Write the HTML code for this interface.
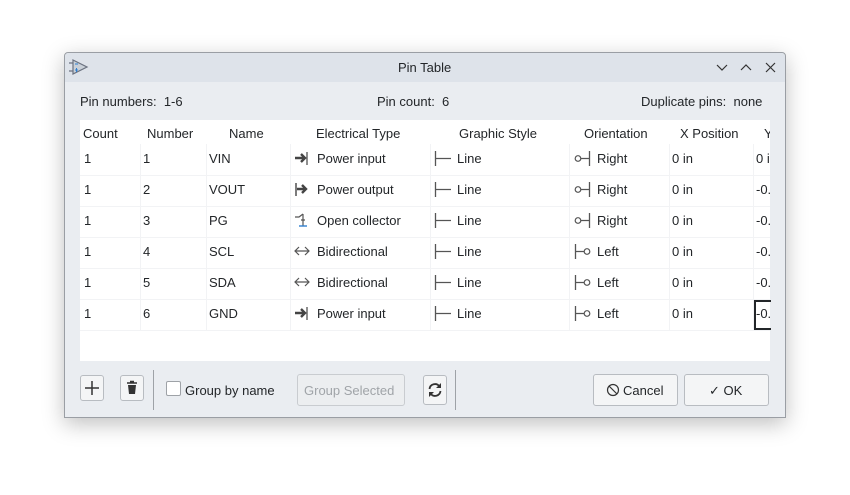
<!DOCTYPE html>
<html><head><style>
*{box-sizing:border-box;margin:0;padding:0}
body{width:850px;height:495px;background:#fff;font-family:"Liberation Sans",sans-serif;font-size:13px;color:#232629;position:relative;overflow:hidden}
.win{position:absolute;left:64px;top:52px;width:722px;height:366px;background:#eaedf1;border:1px solid #9a9ea4;border-radius:4px 4px 0 0;box-shadow:0 6px 22px rgba(0,0,0,.25)}
.title{position:absolute;left:0;top:0;width:720px;height:29px;background:#dee3ea;border-radius:4px 4px 0 0}
.t{position:absolute;white-space:nowrap}
.table{position:absolute;left:15px;top:67px;width:690px;height:241px;background:#fff;overflow:hidden}
.vl{position:absolute;top:0;width:1px;height:211px;background:#f2f3f5}
.hl{position:absolute;left:0;width:690px;height:1px;background:#f2f3f5}
.btn{position:absolute;border:1px solid #b8bcc1;border-radius:3px;background:#f4f5f6}
.sep{position:absolute;top:317px;width:1px;height:40px;background:#9ea2a7}
svg{position:absolute}
</style></head><body>
<div class="win">
<div class="title">
<svg style="left:4px;top:5px" width="22" height="18" viewBox="0 0 22 18"><path d="M4 2 L18 9 L4 16 Z" fill="#c9d0d8" stroke="#6b7280" stroke-width="1.2"/><path d="M0 5h4M0 13h4" stroke="#6b7280" stroke-width="1.2"/><path d="M6 6h3M7.5 10v4M6 12h3" stroke="#2f7fd0" stroke-width="1"/></svg>
<div class="t" style="left:333px;top:7px">Pin Table</div>
<svg style="left:651px;top:9px" width="60" height="12" viewBox="0 0 60 12"><path d="M1 3l5 5 5-5M25 8l5-5 5 5M50 1l9 9M59 1l-9 9" stroke="#333" stroke-width="1.2" fill="none"/></svg>
</div>
<div class="t" style="left:15px;top:41px">Pin numbers:&nbsp; 1-6</div>
<div class="t" style="left:312px;top:41px">Pin count:&nbsp; 6</div>
<div class="t" style="left:576px;top:41px">Duplicate pins:&nbsp; none</div>
<div class="table">
<div class="vl" style="left:60px;top:24px;height:187px"></div>
<div class="vl" style="left:126px;top:24px;height:187px"></div>
<div class="vl" style="left:210px;top:24px;height:187px"></div>
<div class="vl" style="left:350px;top:24px;height:187px"></div>
<div class="vl" style="left:489px;top:24px;height:187px"></div>
<div class="vl" style="left:589px;top:24px;height:187px"></div>
<div class="vl" style="left:673px;top:24px;height:187px"></div>
<div class="hl" style="top:55px"></div><div class="hl" style="top:86px"></div><div class="hl" style="top:117px"></div><div class="hl" style="top:148px"></div><div class="hl" style="top:179px"></div><div class="hl" style="top:210px"></div>
<div class="t" style="left:3px;top:6px">Count</div>
<div class="t" style="left:67px;top:6px">Number</div>
<div class="t" style="left:149px;top:6px">Name</div>
<div class="t" style="left:236px;top:6px">Electrical Type</div>
<div class="t" style="left:379px;top:6px">Graphic Style</div>
<div class="t" style="left:504px;top:6px">Orientation</div>
<div class="t" style="left:600px;top:6px">X Position</div>
<div class="t" style="left:684px;top:6px">Y</div>
</div>
<div id="rows"></div>
<div class="btn" style="left:15px;top:322px;width:24px;height:26px"></div>
<svg style="left:19px;top:327px" width="16" height="16"><path d="M8 1v14M1 8h14" stroke="#333" stroke-width="1.5"/></svg>
<div class="btn" style="left:55px;top:322px;width:24px;height:26px"></div>
<svg style="left:59px;top:327px" width="16" height="16"><path d="M3 3h10M6 1.5h4" stroke="#333" stroke-width="1.6"/><path d="M4 5h8l-1 9H5z" fill="#333"/></svg>
<div class="sep" style="left:88px"></div>
<div style="position:absolute;left:101px;top:328px;width:15px;height:15px;border:1px solid #9ea2a7;border-radius:2px;background:#fff"></div>
<div class="t" style="left:120px;top:330px">Group by name</div>
<div class="btn" style="left:232px;top:321px;width:108px;height:32px;background:#eceef0;border-color:#c9ccd0"></div>
<div class="t" style="left:239px;top:330px;color:#a0a4a8">Group Selected</div>
<div class="btn" style="left:358px;top:322px;width:24px;height:30px"></div>
<svg style="left:362px;top:329px" width="16" height="16" viewBox="0 0 16 16"><path d="M2.5 7A5.5 5.5 0 0 1 12.5 4.5M13.5 9A5.5 5.5 0 0 1 3.5 11.5" stroke="#333" stroke-width="1.8" fill="none"/><path d="M14 1v5h-5zM2 15v-5h5z" fill="#333"/></svg>
<div class="sep" style="left:390px"></div>
<div class="btn" style="left:528px;top:321px;width:85px;height:32px"></div>
<svg style="left:541px;top:330px" width="14" height="14"><circle cx="7" cy="7" r="5.5" stroke="#333" fill="none" stroke-width="1.2"/><path d="M3 3l8 8" stroke="#333" stroke-width="1.2"/></svg>
<div class="t" style="left:558px;top:330px">Cancel</div>
<div class="btn" style="left:619px;top:321px;width:85px;height:32px"></div>
<div class="t" style="left:644px;top:330px">✓ OK</div>
</div>
<script>
var d=[["1","VIN","pi","Power input","r","Right","0 in"],["2","VOUT","po","Power output","r","Right","-0."],["3","PG","oc","Open collector","r","Right","-0."],["4","SCL","bi","Bidirectional","l","Left","-0."],["5","SDA","bi","Bidirectional","l","Left","-0."],["6","GND","pi","Power input","l","Left","-0."]];
var ic={pi:'<path d="M1 8h9M7 4l4 4-4 4" stroke="#444" stroke-width="2.4" fill="none"/><path d="M13 2v13" stroke="#444" stroke-width="1.2"/>',
po:'<path d="M2 2v13" stroke="#444" stroke-width="1.4"/><path d="M3 8h8M8 4l4 4-4 4" stroke="#444" stroke-width="2.4" fill="none"/>',
oc:'<path d="M1 5h4l4 -3M9 2v12M7 8h4" stroke="#555" stroke-width="1.2" fill="none"/><path d="M5 14h8" stroke="#2f7fd0" stroke-width="1.4"/>',
bi:'<path d="M1 8h14M5 4l-4 4 4 4M11 4l4 4-4 4" stroke="#555" stroke-width="1.2" fill="none"/>'};
var h='';
d.forEach(function(r,i){var top=67+31+i*31+1+15-16;
h+='<div class="t" style="left:19px;top:'+top+'px">1</div><div class="t" style="left:78px;top:'+top+'px">'+r[0]+'</div><div class="t" style="left:144px;top:'+top+'px">'+r[1]+'</div>';
h+='<svg style="left:229px;top:'+(top-1)+'px" width="16" height="17">'+ic[r[2]]+'</svg><div class="t" style="left:252px;top:'+top+'px">'+r[3]+'</div>';
h+='<svg style="left:369px;top:'+(top-1)+'px" width="18" height="17"><path d="M1.5 1v15M2 8.5h15" stroke="#555" stroke-width="1.3"/></svg><div class="t" style="left:392px;top:'+top+'px">Line</div>';
h+='<svg style="left:509px;top:'+(top-1)+'px" width="18" height="17">'+(r[4]=='r'?'<circle cx="4" cy="8.5" r="2.8" stroke="#555" fill="none" stroke-width="1.2"/><path d="M7 8.5h8M15.5 1v15" stroke="#555" stroke-width="1.3"/>':'<path d="M1.5 1v15M2 8.5h8" stroke="#555" stroke-width="1.3"/><circle cx="13" cy="8.5" r="2.8" stroke="#555" fill="none" stroke-width="1.2"/>')+'</svg><div class="t" style="left:532px;top:'+top+'px">'+r[5]+'</div>';
h+='<div class="t" style="left:607px;top:'+top+'px">0 in</div>';
h+='<div class="t" style="left:691px;top:'+top+'px;width:14px;overflow:hidden">'+r[6]+'</div>';
});
h+='<div style="position:absolute;left:689px;top:247px;width:17px;height:30px;border:2px solid #232629;border-right:none"></div>';
document.getElementById('rows').innerHTML=h;
</script>
</body></html>
